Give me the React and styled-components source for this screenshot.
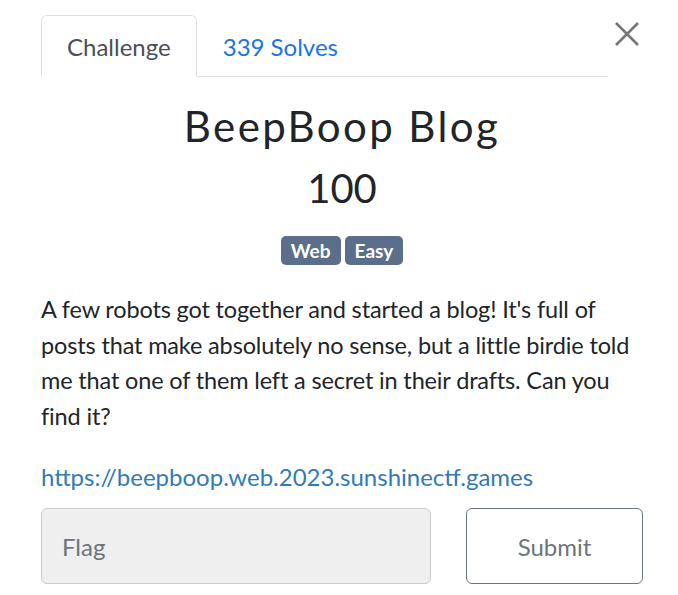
import styled, { createGlobalStyle } from "styled-components";

const Global = createGlobalStyle`
  html, body {
    margin: 0;
    padding: 0;
    background: #fff;
  }
  body {
    font-family: Lato, "Noto Sans", sans-serif;
    color: #212529;
  }
`;

const Modal = styled.div`
  width: 602px;
  padding: 15px 35px 0 41px;
`;

const Header = styled.div`
  display: flex;
  align-items: flex-start;
`;

const Nav = styled.ul`
  flex: 0 0 567px;
  display: flex;
  margin: 0;
  padding: 0;
  list-style: none;
  border-bottom: 1px solid #dee2e6;
`;

const Tab = styled.li`
  height: 60px;
  padding: 0 25px;
  display: flex;
  align-items: center;
  font-size: 24px;
  margin-bottom: -1px;
  border: 1px solid ${(p) => (p.active ? "#dee2e6" : "transparent")};
  border-bottom-color: ${(p) => (p.active ? "#fff" : "transparent")};
  border-radius: 6px 6px 0 0;
  background: ${(p) => (p.active ? "#fff" : "transparent")};
  color: ${(p) => (p.active ? "#495057" : "#1a73e8")};
`;

const Close = styled.button`
  margin: 4px 0 0 4px;
  width: 30px;
  height: 30px;
  padding: 0;
  border: 0;
  background: none;
  display: flex;
  align-items: center;
  justify-content: center;
`;

const Title = styled.h3`
  margin: 24px 0 0;
  text-align: center;
  font-weight: 400;
  font-size: 42px;
  letter-spacing: 2.4px;
  line-height: 1.2;
  color: #212529;
`;

const Value = styled.h4`
  margin: 13px 0 0;
  text-align: center;
  font-weight: 400;
  font-size: 40px;
  line-height: 1.2;
  color: #212529;
`;

const Tags = styled.div`
  display: flex;
  justify-content: center;
  gap: 4px;
  margin-top: 24px;
`;

const Badge = styled.span`
  height: 29px;
  padding: 0 10px;
  display: flex;
  align-items: center;
  background: #5b6f8d;
  color: #fff;
  font-weight: 700;
  font-size: 19px;
  border-radius: 5px;
`;

const Description = styled.p`
  margin: 27px 0 0;
  font-size: 23.5px;
  letter-spacing: -0.15px;
  line-height: 35.5px;
  white-space: nowrap;
  color: #212529;
`;

const Link = styled.a`
  display: block;
  margin-top: 25px;
  font-size: 24px;
  line-height: 36px;
  color: #337ab7;
  text-decoration: none;
`;

const Form = styled.form`
  display: flex;
  justify-content: space-between;
  margin-top: 13px;
`;

const Input = styled.input`
  box-sizing: border-box;
  width: 390px;
  height: 76px;
  padding: 0 20px;
  border: 1px solid #ccc;
  border-radius: 6px;
  background: #efefef;
  font-family: Lato, sans-serif;
  font-size: 24px;
  color: #495057;
  &::placeholder {
    color: #6c757d;
  }
`;

const Submit = styled.button`
  box-sizing: border-box;
  width: 177px;
  height: 76px;
  border: 1px solid #6c757d;
  border-radius: 6px;
  background: #fff;
  font-family: Lato, sans-serif;
  font-size: 24px;
  color: #6c757d;
`;

export default function App() {
  return (
    <>
      <Global />
      <Modal>
        <Header>
          <Nav>
            <Tab active>Challenge</Tab>
            <Tab>339 Solves</Tab>
          </Nav>
          <Close aria-label="Close">
            <svg width="28" height="28" viewBox="0 0 28 28">
              <path d="M3 3 L25 25 M25 3 L3 25" stroke="#777" strokeWidth="2.6" />
            </svg>
          </Close>
        </Header>
        <Title>BeepBoop Blog</Title>
        <Value>100</Value>
        <Tags>
          <Badge>Web</Badge>
          <Badge>Easy</Badge>
        </Tags>
        <Description>
          A few robots got together and started a blog! It's full of
          <br />
          posts that make absolutely no sense, but a little birdie told
          <br />
          me that one of them left a secret in their drafts. Can you
          <br />
          find it?
        </Description>
        <Link href="#">https://beepboop.web.2023.sunshinectf.games</Link>
        <Form onSubmit={(e) => e.preventDefault()}>
          <Input placeholder="Flag" />
          <Submit type="button">Submit</Submit>
        </Form>
      </Modal>
    </>
  );
}
